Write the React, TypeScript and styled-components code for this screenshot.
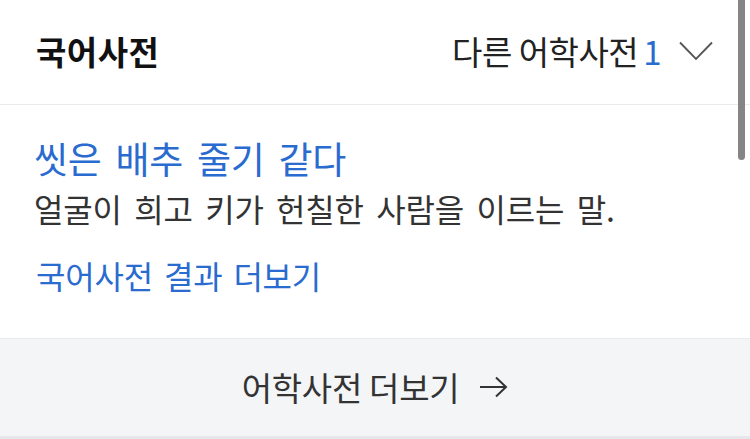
import React from "react";
import styled, { createGlobalStyle } from "styled-components";

const Global = createGlobalStyle`
  html, body { margin: 0; padding: 0; background: #ffffff; }
  body { font-family: "Noto Sans CJK KR", "Noto Sans", sans-serif; -webkit-font-smoothing: antialiased; }
  * { box-sizing: border-box; }
`;

const Page = styled.div`
  position: relative;
  width: 750px;
  height: 439px;
  overflow: hidden;
  background: #fff;
  display: flex;
  flex-direction: column;
`;

const Header = styled.header`
  height: 105px;
  flex: none;
  display: flex;
  align-items: center;
  justify-content: space-between;
  padding: 0 37px 2px 36px;
  border-bottom: 1px solid #e8ebee;
`;

const Title = styled.h1`
  margin: 0;
  font-size: 33px;
  font-weight: 700;
  color: #111;
  letter-spacing: 0.5px;
  line-height: 1;
`;

const Other = styled.div`
  display: flex;
  align-items: center;
  font-size: 33px;
  color: #222;
  line-height: 1;
  letter-spacing: -0.5px;
  padding-left: 4px;
`;

const Count = styled.span`
  color: #2a6bd0;
  margin-left: 5px;
`;

const Chevron = styled.svg`
  margin-left: 18px;
  display: block;
`;

const Body = styled.section`
  flex: 1;
  display: flex;
  flex-direction: column;
  padding: 28px 37px 0 34px;
`;

const Headword = styled.div`
  font-size: 37px;
  color: #2a6bd0;
  line-height: 50px;
  letter-spacing: -0.3px;
  word-spacing: 6px;
`;

const Definition = styled.div`
  font-size: 32px;
  color: #333;
  line-height: 44px;
  margin-top: 3px;
  letter-spacing: -0.2px;
  word-spacing: 5.5px;
`;

const MoreLink = styled.div`
  font-size: 32px;
  color: #2a6bd0;
  line-height: 44px;
  margin-top: 23px;
  padding-left: 2px;
  letter-spacing: -0.2px;
  word-spacing: 4px;
`;

const Footer = styled.footer`
  flex: none;
  height: 101px;
  background: #f4f5f7;
  border-top: 1px solid #e9ebee;
  border-bottom: 3px solid #e6e7ea;
  display: flex;
  align-items: center;
  justify-content: center;
  gap: 20px;
  font-size: 33px;
  color: #333;
  letter-spacing: -0.3px;
  padding-bottom: 2px;
`;

const Scrollbar = styled.div`
  position: absolute;
  top: 0;
  right: 5px;
  width: 7px;
  height: 160px;
  background: #858585;
  border-radius: 0 0 4px 4px;
`;

export default function App() {
  return (
    <Page>
      <Global />
      <Header>
        <Title>국어사전</Title>
        <Other>
          다른 어학사전<Count>1</Count>
          <Chevron width="34" height="20" viewBox="0 0 34 20">
            <polyline points="1,1.5 17,18 33,1.5" fill="none" stroke="#555" strokeWidth="1.8" />
          </Chevron>
        </Other>
      </Header>
      <Body>
        <Headword>씻은 배추 줄기 같다</Headword>
        <Definition>얼굴이 희고 키가 헌칠한 사람을 이르는 말.</Definition>
        <MoreLink>국어사전 결과 더보기</MoreLink>
      </Body>
      <Footer>
        <span>어학사전 더보기</span>
        <svg width="29" height="22" viewBox="0 0 29 22">
          <path d="M1 11 H27 M17 1.5 L27 11 L17 20.5" fill="none" stroke="#333" strokeWidth="2" />
        </svg>
      </Footer>
      <Scrollbar />
    </Page>
  );
}
